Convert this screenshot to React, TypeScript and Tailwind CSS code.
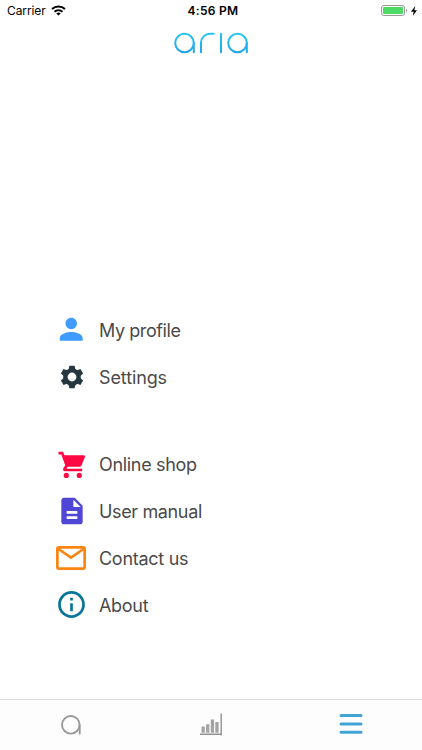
import type React from "react";
import { IoMdInformationCircleOutline, IoMdPerson } from "react-icons/io";
import { MdDescription } from "react-icons/md";

type Icon = React.ComponentType<{ className?: string }>;

interface MenuItem {
	label: string;
	icon: Icon;
	iconClass: string;
	textClass: string;
}

const GearIcon: Icon = ({ className }) => (
	<svg className={className} viewBox="0 0 24 24" fill="currentColor">
		<circle cx="12" cy="12" r="6.6" fill="none" stroke="currentColor" strokeWidth="4.4" />
		{[0, 60, 120, 180, 240, 300].map((angle) => (
			<path key={angle} d="M9.4.7h5.2l.9 4.3-1.3 1.6H9.8L8.5 5Z" transform={`rotate(${angle} 12 12)`} />
		))}
	</svg>
);

const CartIcon: Icon = ({ className }) => (
	<svg className={className} viewBox="0 0 28 28" fill="currentColor">
		<path d="M.5.8h4.4l1.7 3.5h19c1.3 0 1.8.8 1.4 1.8l-3.6 8.3c-.4.8-1.1 1.3-2.1 1.3H9.6l-1.2 2.1h15.8v2.5H7.2c-2 0-2.7-1.6-1.8-3.1l1.8-3L3.3 3.4H.5Z" />
		<circle cx="8.3" cy="24.4" r="2.6" />
		<circle cx="21.3" cy="24.4" r="2.6" />
	</svg>
);

const MailIcon: Icon = ({ className }) => (
	<svg className={className} viewBox="0 0 30 24" fill="none" stroke="currentColor" strokeWidth="2.7">
		<rect x="1.35" y="1.35" width="27.3" height="21.3" rx="1.6" />
		<path d="m2.5 3 12.5 8.7L27.5 3" />
	</svg>
);

const accountItems: MenuItem[] = [
	{ label: "My profile", icon: IoMdPerson, iconClass: "mb-[2px] size-[30.5px] text-[#409bff]", textClass: "tracking-[-0.42px]" },
	{ label: "Settings", icon: GearIcon, iconClass: "size-6 text-[#263740]", textClass: "tracking-[-0.12px]" },
];

const supportItems: MenuItem[] = [
	{ label: "Online shop", icon: CartIcon, iconClass: "size-7 text-[#ff0844]", textClass: "tracking-[-0.32px]" },
	{ label: "User manual", icon: MdDescription, iconClass: "mb-px size-8 text-[#4f46d8]", textClass: "tracking-[-0.36px]" },
	{ label: "Contact us", icon: MailIcon, iconClass: "mr-px mb-px h-6 w-[30px] text-[#fb8512]", textClass: "tracking-[-0.28px]" },
	{ label: "About", icon: IoMdInformationCircleOutline, iconClass: "mb-px size-[33px] text-[#0a7598]", textClass: "tracking-[-0.3px]" },
];

const StatusBar = (): React.ReactElement => (
	<div className="grid h-[22px] grid-cols-3 items-center pl-[7px] pr-[5px] text-[12px] leading-none text-black">
		<div className="flex items-center gap-[5px]">
			<span className="tracking-[-0.1px]">Carrier</span>
			<svg className="mb-px h-[11px] w-[15px]" viewBox="0 0 15 11" fill="none" stroke="currentColor" strokeWidth="2">
				<path d="M1 4.1C4.7.6 10.3.6 14 4.1" />
				<path d="M3.5 6.7c2.3-2.1 5.7-2.1 8 0" />
				<path d="M5.3 8.4c1.2-1.1 3.2-1.1 4.4 0L7.5 10.6Z" fill="currentColor" stroke="none" />
			</svg>
		</div>
		<span className="justify-self-center whitespace-nowrap pl-[2px] font-semibold tracking-[0.3px]">4:56 PM</span>
		<div className="flex items-center justify-end gap-[3px]">
			<svg className="mb-px h-[11px] w-[27px]" viewBox="0 0 27 11">
				<rect x=".5" y=".5" width="23" height="10" rx="2.5" fill="none" stroke="#9b9b9b" />
				<rect x="2" y="2" width="20" height="7" rx="1" fill="#4cd964" />
				<path d="M25 3.7c1.6.5 1.6 3.1 0 3.6Z" fill="#9b9b9b" />
			</svg>
			<svg className="mb-px h-[10px] w-[6px]" viewBox="0 0 6 10" fill="currentColor">
				<path d="M4.2 0 0 5.7h2.7L1.8 10 6 4.2H3.4Z" />
			</svg>
		</div>
	</div>
);

const Logo = (): React.ReactElement => (
	<svg className="mx-auto mt-[10px] h-[22px] w-[76px]" viewBox="0 0 76 22" fill="none" strokeWidth="2" strokeLinecap="round">
		<defs>
			<linearGradient id="logo" x1="0" y1="0" x2="0" y2="22" gradientUnits="userSpaceOnUse">
				<stop stopColor="#27c8f4" />
				<stop offset="1" stopColor="#23a2ea" />
			</linearGradient>
		</defs>
		<g stroke="url(#logo)">
			<circle cx="11.5" cy="11" r="9.3" />
			<path d="M20.8 11v9.3" />
			<path d="M28 20.3v-9.5a9.1 9.1 0 0 1 9.1-9.1h3.6" />
			<path d="M48 20.3 48.01 1.7" />
			<circle cx="64.5" cy="11" r="9.3" />
			<path d="M73.8 11v9.3" />
		</g>
	</svg>
);

const MenuGroup = ({ items }: { items: MenuItem[] }): React.ReactElement => (
	<ul>
		{items.map(({ label, icon: ItemIcon, iconClass, textClass }) => (
			<li key={label} className="flex h-[46.8px] items-center">
				<span className="flex w-[43px] shrink-0 items-center justify-center">
					<ItemIcon className={iconClass} />
				</span>
				<span className={`ml-[6px] whitespace-nowrap text-[18px] text-[#4a4a4a] ${textClass}`}>{label}</span>
			</li>
		))}
	</ul>
);

const TabBar = (): React.ReactElement => (
	<nav className="grid h-[51px] grid-cols-3 border-t border-[#dcdcdc] bg-[#fdfdfd]">
		<button type="button" aria-label="Home" className="flex justify-center pt-[15px]">
			<svg className="ml-[2px] h-[20px] w-[20px]" viewBox="0 0 20 20" fill="none" stroke="#999999" strokeWidth="1.9">
				<circle cx="9.8" cy="9.8" r="8.8" />
				<path d="M18.7 9.8v9.6" />
			</svg>
		</button>
		<button type="button" aria-label="Statistics" className="flex justify-center pt-[13px]">
			<svg className="ml-[1px] h-[23px] w-[23px]" viewBox="0 0 23 23" fill="#a3a3a3">
				<path d="M1.5 13.5h3.3v6.2H1.5zM6.1 11.2h3.3v8.5H6.1zM10.8 6.4h3.3v13.3h-3.3zM15.3 9h3.3v10.7h-3.3z" />
				<path d="M0 20.4h20.5V.5h1.4v22h-1.4v-.6H0z" fill="#929292" />
			</svg>
		</button>
		<button type="button" aria-label="Menu" className="flex justify-center pr-[2px] pt-[14px]">
			<svg className="h-[20px] w-[24px]" viewBox="0 0 24 20" stroke="#41a4d5" strokeWidth="3" strokeLinecap="round">
				<path d="M2 1.5h20M2 9.9h20M2 18.2h20" />
			</svg>
		</button>
	</nav>
);

const App = (): React.ReactElement => {
	return (
		<div className="flex h-[750px] w-[422px] flex-col overflow-hidden bg-white font-['Inter',sans-serif]">
			<header>
				<StatusBar />
				<Logo />
			</header>
			<main className="flex flex-1 flex-col gap-[41px] pl-[50px] pt-[253px]">
				<MenuGroup items={accountItems} />
				<MenuGroup items={supportItems} />
			</main>
			<TabBar />
		</div>
	);
};

export default App;
